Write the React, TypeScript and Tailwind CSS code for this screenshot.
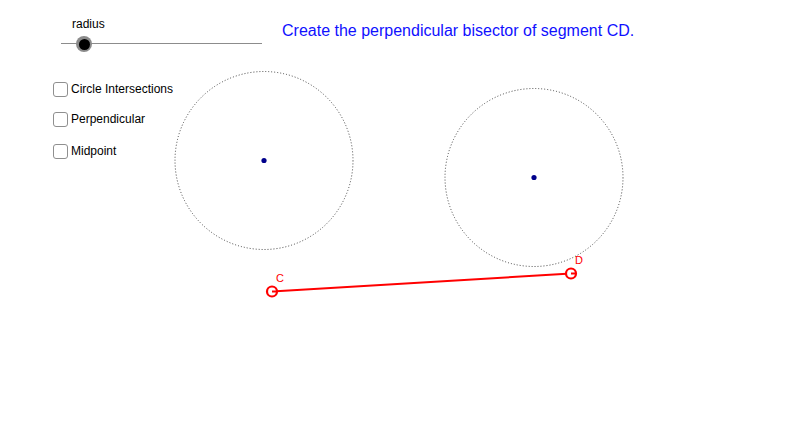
const font = { fontFamily: '"Liberation Sans", Arial, sans-serif' };

function Checkbox({ label }: { label: string }) {
  return (
    <label className="flex h-[15px] items-center gap-[3px] text-[12px] leading-[15px] text-black">
      <span className="h-[15px] w-[15px] rounded-[3px] border border-[#8f8f8f] bg-white" />
      {label}
    </label>
  );
}

function Construction() {
  return (
    <svg className="absolute inset-0" width="800" height="430" viewBox="0 0 800 430">
      <circle cx="264" cy="160.5" r="89" fill="none" stroke="#444" strokeWidth="1" strokeDasharray="1 2" />
      <circle cx="534" cy="177.5" r="89" fill="none" stroke="#444" strokeWidth="1" strokeDasharray="1 2" />
      <circle cx="264" cy="160.5" r="2.6" fill="#00008b" />
      <circle cx="534" cy="177.5" r="2.6" fill="#00008b" />
      <line x1="272" y1="291.5" x2="571" y2="273.5" stroke="#ff0000" strokeWidth="2" />
      <circle cx="272" cy="291.5" r="5" fill="white" stroke="#ff0000" strokeWidth="2.2" />
      <circle cx="571" cy="273.5" r="5" fill="white" stroke="#ff0000" strokeWidth="2.2" />
      <line x1="272" y1="291.5" x2="276" y2="291.5" stroke="#ff0000" strokeWidth="2" />
      <line x1="571" y1="273.5" x2="575" y2="273.5" stroke="#ff0000" strokeWidth="2" />
      <text x="276" y="282" fill="#ff0000" fontSize="11" style={font}>C</text>
      <text x="575" y="264" fill="#ff0000" fontSize="11" style={font}>D</text>
    </svg>
  );
}

export default function App() {
  return (
    <div className="relative h-[430px] w-[800px] overflow-hidden bg-white" style={font}>
      <Construction />
      <div className="relative flex items-start">
        <div className="w-[282px] pl-[53px] pt-[17px]">
          <div className="pl-[19px] text-[12px] leading-[14px] text-black">radius</div>
          <div className="relative ml-[8px] mt-[4px] h-[16px] w-[201px]">
            <div className="absolute left-0 right-0 top-[8px] h-px bg-[#8c8c8c]" />
            <div className="absolute left-[15px] top-[1px] flex h-[16px] w-[16px] items-center justify-center rounded-full bg-[#8a8a8a]">
              <div className="h-[11px] w-[11px] rounded-full bg-black" />
            </div>
          </div>
          <div className="mt-[31px] flex flex-col">
            <Checkbox label="Circle Intersections" />
            <div className="mt-[15px]">
              <Checkbox label="Perpendicular" />
            </div>
            <div className="mt-[17px]">
              <Checkbox label="Midpoint" />
            </div>
          </div>
        </div>
        <div className="pt-[21px] text-[16px] leading-[20px] text-[#1010ff]">
          Create the perpendicular bisector of segment CD.
        </div>
      </div>
    </div>
  );
}
